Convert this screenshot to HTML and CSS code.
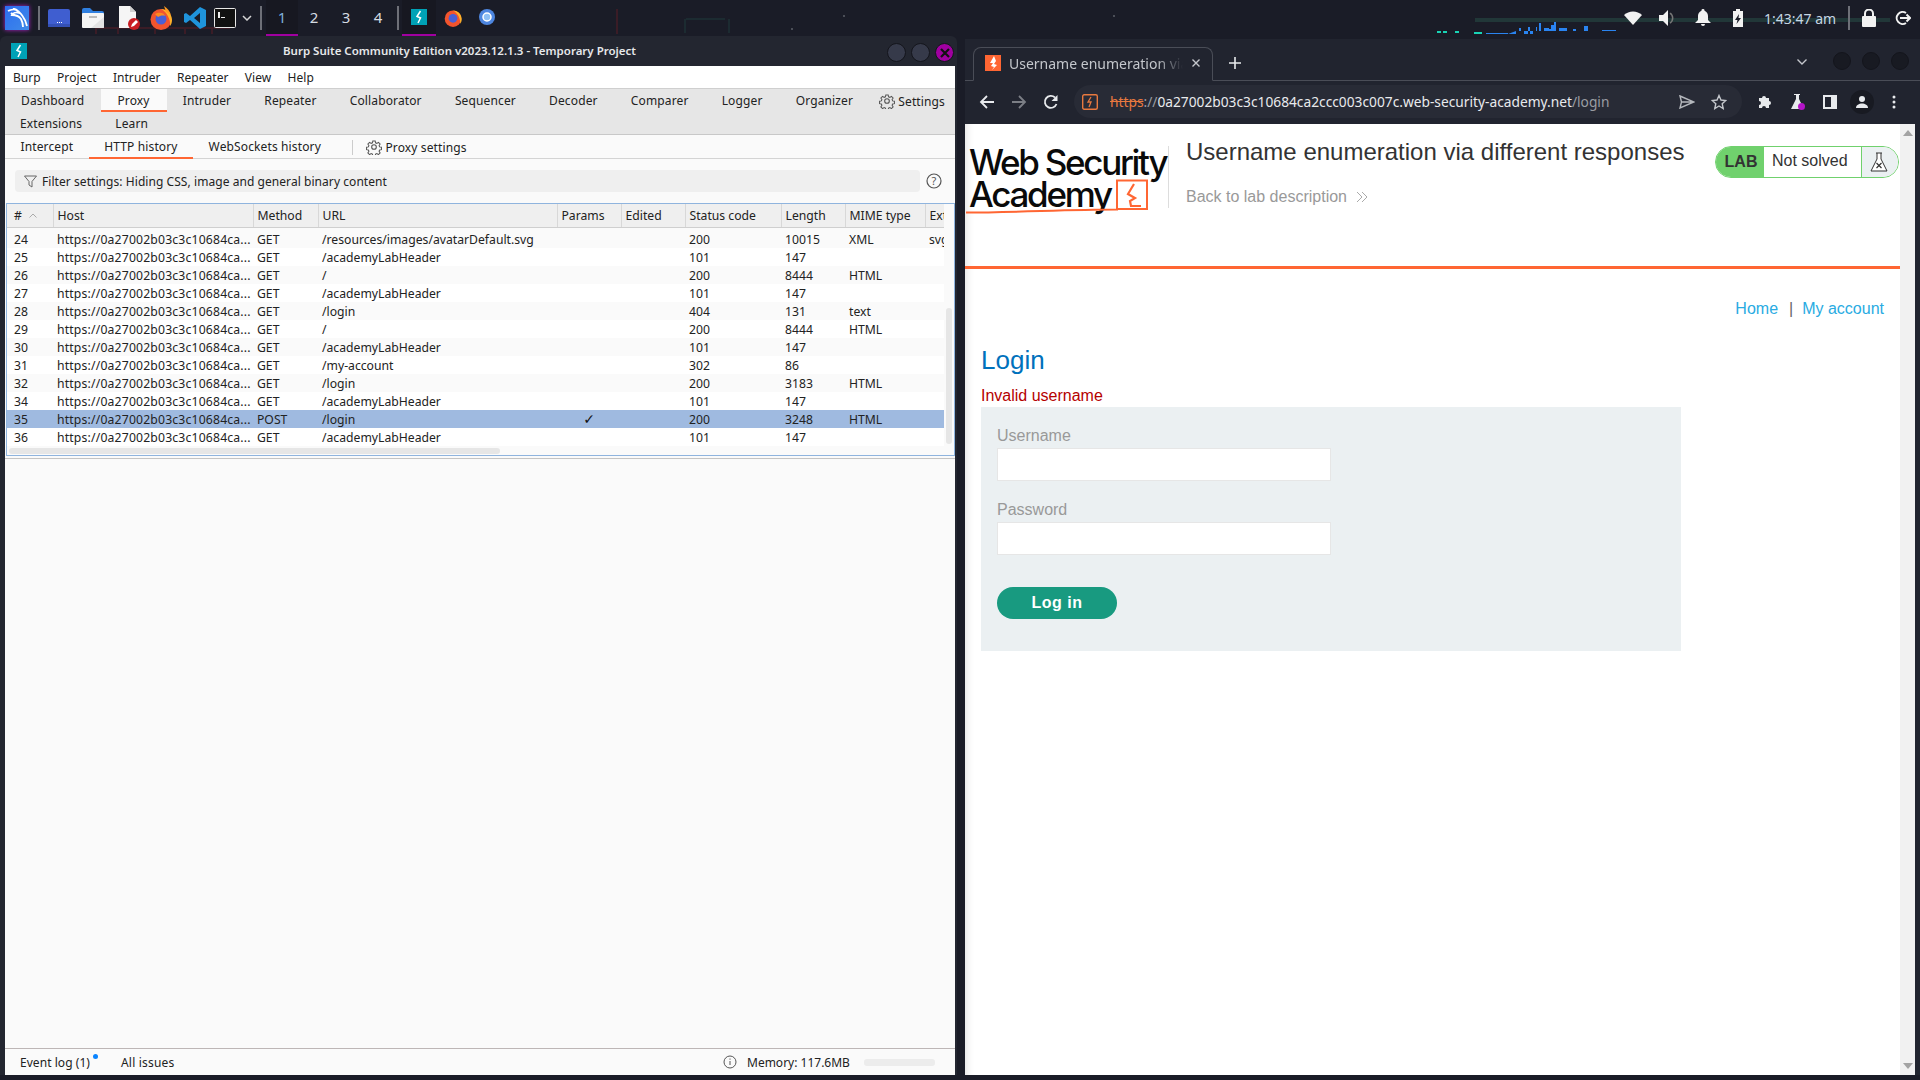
FILE: index.html
```html
<!DOCTYPE html>
<html lang="en">
<head>
  <meta charset="UTF-8">
  <title>Burp Suite and Web Security Academy</title>
  <link rel="stylesheet" href="styles.css">
</head>
<body>

<!-- top panel -->
<header class="panel">
  <svg class="panel-graph" width="1920" height="36" viewBox="0 0 1920 36">
    <g fill="none" stroke="#3a1c26" stroke-width="2">
      <path d="M96 34V28H230M118 34V28M155 34V28M185 34V28M212 34V28M617 34V9"/>
    </g>
    <path d="M685 33V19M729 33V19M686 19H725" fill="none" stroke="#1f3a3d" stroke-width="1"/>
    <path d="M1475 19H1890M1475 21H1890" stroke="#25403f" stroke-width="1.5"/>
    <path d="M1437 33h4v-2h-4zM1443 33h4v-2h-4zM1455 33h4v-2h-4zM1474 34h8v-2h-8z" fill="#19d3b5"/>
    <path d="M1486 34h22v-1h-22zM1508 34h8v-3h3v-3h2v3h3v3h4v-7h2v7h3v-3h3v-4h1v4h2v-8h2v8h3v-3h5v1h2v-4h3v-3h2v9h3v-3h8v3h6v-2h3v2h8v-5h4v5h14v-1h14v1h-100z" fill="#2a84f0"/>
    <g fill="#5c5f68"><circle cx="844" cy="16" r="1"/><circle cx="1114" cy="16" r="1"/><circle cx="792" cy="29" r="1"/></g>
  </svg>

  <div class="launcher launcher-kali">
    <svg width="24" height="24" viewBox="0 0 24 24">
      <defs><linearGradient id="kaliBg" x1="0" y1="0" x2="1" y2="1"><stop offset="0" stop-color="#2d6df0"/><stop offset="1" stop-color="#3f8ae8"/></linearGradient></defs>
      <rect width="24" height="24" fill="url(#kaliBg)"/>
      <path d="M3 5c5-3 10-1 13 3 2 3 4 4 6 12M8 3c3 0 5 2 6 4-3-1-6 0-7 2 3 0 7 1 9 4 1 2 2 4 2 8M6 7c3 3 7 2 9 5" fill="none" stroke="#fff" stroke-width="1.8"/>
    </svg>
  </div>
  <span class="panel-sep"></span>
  <div class="launcher">
    <svg width="22" height="18" viewBox="0 0 22 18"><rect width="22" height="18" rx="2" fill="#3f5ed0"/><rect y="15" width="22" height="3" fill="#3450b4"/><path d="M9 13h1v1H9zM11 13h1v1h-1zM13 13h1v1h-1z" fill="#fff"/></svg>
  </div>
  <div class="launcher">
    <svg width="22" height="20" viewBox="0 0 22 20"><path d="M0 2a2 2 0 012-2h6l3 3h9a2 2 0 012 2v3H0z" fill="#2f7fe0"/><rect y="5" width="22" height="15" rx="1" fill="#f4f4f4"/><path d="M22 9v10a1 1 0 01-1 1H9z" fill="#e2e2e2"/><rect x="7" y="8" width="8" height="2" fill="#bbb"/></svg>
  </div>
  <div class="launcher launcher-doc">
    <svg width="22" height="24" viewBox="0 0 22 24"><path d="M1 0h11l6 6v16H1z" fill="#f5f5f5"/><path d="M12 0l6 6h-6z" fill="#cfcfcf"/><circle cx="16" cy="18" r="6" fill="#c91c22"/><path d="M13 21l1-3 4-4 2 2-4 4z" fill="#fff"/></svg>
  </div>
  <div class="launcher">
    <svg width="22" height="24" viewBox="0 0 22 24"><circle cx="11" cy="13.5" r="10.5" fill="#f2542d"/><path d="M11 3c6 0 11 5 11 11 0 3-1 5-2 6 1-6-3-14-9-17z" fill="#ffb129"/><path d="M14 0c3 2 6 5 7 9l-5-3z" fill="#ff9a1f"/><circle cx="11" cy="13" r="5.5" fill="#4a5fd6"/><path d="M5 8c3-2 9-2 10 2-3-1-5 0-7 1z" fill="#ff8a1f"/></svg>
  </div>
  <div class="launcher">
    <svg width="22" height="22" viewBox="0 0 22 22"><path d="M16 0l6 3v16l-6 3L6 13l-4 3-2-1V7l2-1 4 3zm0 6l-6 5 6 5z" fill="#1f94dc"/></svg>
  </div>
  <div class="launcher launcher-term">
    <svg width="22" height="20" viewBox="0 0 22 20"><rect x=".5" y=".5" width="21" height="19" rx="1" fill="#111" stroke="#e8e8e8"/><path d="M4 4h2v6H4zM7 9h4v1H7z" fill="#eee"/></svg>
  </div>
  <svg class="panel-chevron" width="10" height="6" viewBox="0 0 10 6"><path d="M1 1l4 4 4-4" fill="none" stroke="#d5d5d5" stroke-width="1.5"/></svg>
  <span class="panel-sep panel-sep-b"></span>
  <div class="workspace active">1</div>
  <div class="workspace">2</div>
  <div class="workspace">3</div>
  <div class="workspace">4</div>
  <span class="panel-sep panel-sep-c"></span>
  <div class="task active">
    <svg width="16" height="16" viewBox="0 0 16 16"><rect width="16" height="16" fill="#00a2b6"/><path d="M9.5 2L6 7.500l3.500 1.500L7 14" fill="none" stroke="#fff" stroke-width="1.5"/></svg>
  </div>
  <div class="task">
    <svg width="18" height="19" viewBox="0 0 22 24"><circle cx="11" cy="13.5" r="10.5" fill="#f2542d"/><path d="M11 3c6 0 11 5 11 11 0 3-1 5-2 6 1-6-3-14-9-17z" fill="#ffb129"/><circle cx="11" cy="13" r="5.5" fill="#4a5fd6"/></svg>
  </div>
  <div class="task">
    <svg width="16" height="16" viewBox="0 0 16 16"><circle cx="8" cy="8" r="8" fill="#4d86e0"/><circle cx="8" cy="8" r="4" fill="#8fc0f5" stroke="#fff" stroke-width="1.5"/></svg>
  </div>

  <div class="tray">
    <div class="tray-item"><svg width="18" height="14" viewBox="0 0 18 14"><path d="M0 4a13 13 0 0118 0l-9 10z" fill="#f2f2f2"/></svg></div>
    <div class="tray-item"><svg width="18" height="18" viewBox="0 0 18 18"><path d="M0 6h4l5-5v16l-5-5H0z" fill="#f2f2f2"/><path d="M11 4a6 6 0 010 10" fill="none" stroke="#777" stroke-width="1.5"/></svg></div>
    <div class="tray-item"><svg width="16" height="18" viewBox="0 0 16 18"><path d="M8 0a1.5 1.5 0 011.5 1.7C12 2.5 13 5 13 7v4l3 3H0l3-3V7c0-2 1-4.500 3.5-5.300A1.5 1.5 0 018 0zM6 15h4a2 2 0 01-4 0z" fill="#f2f2f2"/></svg></div>
    <div class="tray-item"><svg width="10" height="18" viewBox="0 0 10 18"><path d="M3 0h4v2h3v16H0V2h3z" fill="#f2f2f2"/><path d="M6 5L2 11h2.5L3.5 15 8 9H5.5z" fill="#1a1c27"/></svg></div>
    <div class="clock">1:43:47 am</div>
    <span class="panel-sep panel-sep-d"></span>
    <div class="tray-item tray-item-end"><svg width="14" height="18" viewBox="0 0 14 18"><path d="M3 8V4.500a4 4 0 018 0V8" fill="none" stroke="#f2f2f2" stroke-width="2"/><rect y="7" width="14" height="11" rx="1" fill="#f2f2f2"/></svg></div>
    <div class="tray-item tray-item-end"><svg width="16" height="16" viewBox="0 0 16 16"><path d="M11 3a6 6 0 100 10" fill="none" stroke="#f2f2f2" stroke-width="2"/><path d="M5 8h10M11.5 4.5L15 8l-3.500 3.500" fill="none" stroke="#f2f2f2" stroke-width="2"/></svg></div>
  </div>
</header>

<main class="desktop">

  <!-- burp window -->
  <section class="burp">
    <div class="burp-title">
      <svg class="burp-logo" width="16" height="16" viewBox="0 0 16 16"><rect width="16" height="16" fill="#00a2b6"/><path d="M9.5 2L6 7.500l3.500 1.500L7 14" fill="none" stroke="#fff" stroke-width="1.5"/></svg>
      <span class="burp-title-text">Burp Suite Community Edition v2023.12.1.3 - Temporary Project</span>
      <div class="win-buttons">
        <span class="win-btn"></span>
        <span class="win-btn"></span>
        <span class="win-btn win-btn-close">
          <svg width="10" height="10" viewBox="0 0 10 10"><path d="M1 1l8 8M9 1L1 9" stroke="#111" stroke-width="2.2"/></svg>
        </span>
      </div>
    </div>

    <div class="burp-body">
      <nav class="menu-bar">
        <span>Burp</span><span>Project</span><span>Intruder</span><span>Repeater</span><span>View</span><span>Help</span>
      </nav>

      <div class="main-tabs">
        <div class="tab-row">
          <span class="tab">Dashboard</span>
          <span class="tab active">Proxy</span>
          <span class="tab">Intruder</span>
          <span class="tab">Repeater</span>
          <span class="tab">Collaborator</span>
          <span class="tab">Sequencer</span>
          <span class="tab">Decoder</span>
          <span class="tab">Comparer</span>
          <span class="tab">Logger</span>
          <span class="tab">Organizer</span>
          <span class="tab-settings">
            <svg width="16" height="16" viewBox="0 0 24 24"><use href="#gear"/></svg>
            Settings
          </span>
        </div>
        <div class="tab-row tab-row-second">
          <span class="tab">Extensions</span>
          <span class="tab">Learn</span>
        </div>
      </div>

      <div class="sub-tabs">
        <span class="tab">Intercept</span>
        <span class="tab active">HTTP history</span>
        <span class="tab">WebSockets history</span>
        <span class="sub-sep"></span>
        <span class="tab-settings">
          <svg width="16" height="16" viewBox="0 0 24 24"><use href="#gear"/></svg>
          Proxy settings
        </span>
      </div>

      <div class="filter-row">
        <div class="filter-box">
          <svg width="13" height="13" viewBox="0 0 13 13"><path d="M.5 1h12L8 6.5V12L5 10V6.5z" fill="none" stroke="#666"/></svg>
          Filter settings: Hiding CSS, image and general binary content
        </div>
        <svg class="help-icon" width="16" height="16" viewBox="0 0 16 16"><circle cx="8" cy="8" r="7" fill="none" stroke="#555" stroke-width="1.2"/><text x="8" y="11.5" text-anchor="middle" class="help-mark">?</text></svg>
      </div>

      <div class="history">
        <div class="history-clip">
          <table class="history-table">
            <colgroup>
              <col class="col-num"><col class="col-host"><col class="col-method"><col class="col-url"><col class="col-flag"><col class="col-flag"><col class="col-status"><col class="col-flag"><col class="col-mime"><col class="col-ext">
            </colgroup>
            <thead>
              <tr>
                <th># <svg class="sort-arrow" width="8" height="5" viewBox="0 0 8 5"><path d="M.5 4.5L4 1l3.5 3.5" fill="none" stroke="#aaa"/></svg></th>
                <th>Host</th><th>Method</th><th>URL</th><th>Params</th><th>Edited</th><th>Status code</th><th>Length</th><th>MIME type</th><th>Extension</th>
              </tr>
            </thead>
            <tbody>
              <tr><td>24</td><td>https://0a27002b03c3c10684ca...</td><td>GET</td><td>/resources/images/avatarDefault.svg</td><td></td><td></td><td>200</td><td>10015</td><td>XML</td><td>svg</td></tr>
              <tr><td>25</td><td>https://0a27002b03c3c10684ca...</td><td>GET</td><td>/academyLabHeader</td><td></td><td></td><td>101</td><td>147</td><td></td><td></td></tr>
              <tr><td>26</td><td>https://0a27002b03c3c10684ca...</td><td>GET</td><td>/</td><td></td><td></td><td>200</td><td>8444</td><td>HTML</td><td></td></tr>
              <tr><td>27</td><td>https://0a27002b03c3c10684ca...</td><td>GET</td><td>/academyLabHeader</td><td></td><td></td><td>101</td><td>147</td><td></td><td></td></tr>
              <tr><td>28</td><td>https://0a27002b03c3c10684ca...</td><td>GET</td><td>/login</td><td></td><td></td><td>404</td><td>131</td><td>text</td><td></td></tr>
              <tr><td>29</td><td>https://0a27002b03c3c10684ca...</td><td>GET</td><td>/</td><td></td><td></td><td>200</td><td>8444</td><td>HTML</td><td></td></tr>
              <tr><td>30</td><td>https://0a27002b03c3c10684ca...</td><td>GET</td><td>/academyLabHeader</td><td></td><td></td><td>101</td><td>147</td><td></td><td></td></tr>
              <tr><td>31</td><td>https://0a27002b03c3c10684ca...</td><td>GET</td><td>/my-account</td><td></td><td></td><td>302</td><td>86</td><td></td><td></td></tr>
              <tr><td>32</td><td>https://0a27002b03c3c10684ca...</td><td>GET</td><td>/login</td><td></td><td></td><td>200</td><td>3183</td><td>HTML</td><td></td></tr>
              <tr><td>34</td><td>https://0a27002b03c3c10684ca...</td><td>GET</td><td>/academyLabHeader</td><td></td><td></td><td>101</td><td>147</td><td></td><td></td></tr>
              <tr class="selected"><td>35</td><td>https://0a27002b03c3c10684ca...</td><td>POST</td><td>/login</td><td class="check">✓</td><td></td><td>200</td><td>3248</td><td>HTML</td><td></td></tr>
              <tr><td>36</td><td>https://0a27002b03c3c10684ca...</td><td>GET</td><td>/academyLabHeader</td><td></td><td></td><td>101</td><td>147</td><td></td><td></td></tr>
            </tbody>
          </table>
        </div>
        <span class="scroll-h"></span>
        <span class="scroll-v"></span>
      </div>

      <div class="burp-empty"></div>

      <footer class="status-bar">
        <span class="event-log">Event log (1)<i class="dot"></i></span>
        <span class="all-issues">All issues</span>
        <span class="memory">
          <svg width="14" height="14" viewBox="0 0 14 14"><circle cx="7" cy="7" r="6" fill="none" stroke="#555"/><path d="M7 6v4M7 3.5v1.2" stroke="#555"/></svg>
          Memory: 117.6MB
        </span>
        <span class="memory-bar"></span>
      </footer>
    </div>
  </section>

  <!-- browser window -->
  <section class="browser">
    <div class="tab-strip">
      <div class="browser-tab">
        <svg width="16" height="16" viewBox="0 0 16 16"><rect width="16" height="16" fill="#ff6633"/><path d="M9 1L5 8h3L6 11l3 1-2 3 5-5-3-1 2-3z" fill="#fff"/></svg>
        <span class="browser-tab-title">Username enumeration via different responses</span>
        <svg width="10" height="10" viewBox="0 0 10 10"><path d="M1.5 1.5l7 7M8.5 1.5l-7 7" stroke="#c4c7cc" stroke-width="1.4"/></svg>
      </div>
      <svg class="new-tab" width="12" height="12" viewBox="0 0 12 12"><path d="M6 0v12M0 6h12" stroke="#e8eaed" stroke-width="1.6"/></svg>
      <svg class="tab-list" width="10" height="6" viewBox="0 0 10 6"><path d="M.5.5L5 5 9.5.5" fill="none" stroke="#c4c7cc" stroke-width="1.4"/></svg>
      <span class="chrome-btn"></span>
      <span class="chrome-btn"></span>
      <span class="chrome-btn"></span>
    </div>

    <div class="toolbar">
      <div class="tool"><svg width="16" height="16" viewBox="0 0 16 16"><path d="M15 8H2M8 2L2 8l6 6" fill="none" stroke="#e8eaed" stroke-width="1.8"/></svg></div>
      <div class="tool"><svg width="16" height="16" viewBox="0 0 16 16"><path d="M1 8h13M8 2l6 6-6 6" fill="none" stroke="#7b7e85" stroke-width="1.8"/></svg></div>
      <div class="tool"><svg width="16" height="16" viewBox="0 0 16 16"><path d="M13.5 10A6 6 0 1112 3.5" fill="none" stroke="#e8eaed" stroke-width="1.8"/><path d="M14.5 1v6h-6z" fill="#e8eaed"/></svg></div>
      <div class="omnibox">
        <svg class="site-icon" width="16" height="16" viewBox="0 0 16 16"><rect x=".7" y=".7" width="14.6" height="14.6" rx="1.5" fill="none" stroke="#e8793f" stroke-width="1.4"/><path d="M9 3L6 8h3l-2 5" fill="none" stroke="#e8793f" stroke-width="1.3"/></svg>
        <span class="url"><s class="url-scheme">https</s><span class="url-dim">://</span>0a27002b03c3c10684ca2ccc003c007c.web-security-academy.net<span class="url-dim">/login</span></span>
        <svg class="omni-send" width="16" height="14" viewBox="0 0 16 14"><path d="M1 1l14 6L1 13l1.5-6zM2.5 7H15" fill="none" stroke="#b5b8bd" stroke-width="1.4"/></svg>
        <svg class="omni-star" width="16" height="16" viewBox="0 0 16 16"><path d="M8 1.5l2 4.500 4.800.5-3.600 3.200 1 4.800L8 12l-4.200 2.500 1-4.800L1.200 6.500 6 6z" fill="none" stroke="#c4c7cc" stroke-width="1.4"/></svg>
      </div>
      <div class="tool"><svg width="15" height="15" viewBox="0 0 15 15"><path d="M1 4h3a2 2 0 014 0h3v3a2 2 0 010 4v3H8a2 2 0 00-4 0H1v-3a2 2 0 000-4z" fill="#e8eaed"/></svg></div>
      <div class="tool"><svg width="15" height="16" viewBox="0 0 15 16"><path d="M4 0h6v1H9v4l5 10H1L6 5V1H4z" fill="#e8eaed"/><circle cx="11.5" cy="12.5" r="3.5" fill="#b414c8"/></svg></div>
      <div class="tool"><svg width="14" height="14" viewBox="0 0 14 14"><rect x="1" y="1" width="12" height="12" fill="none" stroke="#e8eaed" stroke-width="2"/><rect x="8" y="1" width="5" height="12" fill="#e8eaed"/></svg></div>
      <div class="tool"><span class="avatar"><svg width="14" height="14" viewBox="0 0 14 14"><circle cx="7" cy="4" r="3" fill="#e8eaed"/><path d="M1 13c0-3 3-4.500 6-4.500s6 1.500 6 4.500z" fill="#e8eaed"/></svg></span></div>
      <div class="tool"><svg width="4" height="14" viewBox="0 0 4 14"><circle cx="2" cy="2" r="1.5" fill="#e8eaed"/><circle cx="2" cy="7" r="1.5" fill="#e8eaed"/><circle cx="2" cy="12" r="1.5" fill="#e8eaed"/></svg></div>
    </div>

    <div class="viewport">
      <div class="page">
        <div class="lab-header">
          <div class="academy-logo">
            <div class="academy-line">Web Security</div>
            <div class="academy-line">Academy</div>
            <svg class="academy-mark" width="184" height="38" viewBox="0 0 184 38">
              <path d="M0 34.500c50 0 100-3 151-3V2.500h30V31h-30" fill="none" stroke="#ff6633" stroke-width="2"/>
              <path d="M168 6l-6 10 7 4-5 3 1 5h10" fill="none" stroke="#ff6633" stroke-width="2.2"/>
            </svg>
          </div>
          <div class="lab-title">
            <h2>Username enumeration via different responses</h2>
            <a class="back-link">Back to lab description
              <svg width="12" height="12" viewBox="0 0 12 12"><path d="M1 1l5 5-5 5M6 1l5 5-5 5" fill="none" stroke="#aaa"/></svg>
            </a>
          </div>
          <div class="lab-status">
            <span class="lab-tag">LAB</span>
            <span class="lab-state">Not solved</span>
            <span class="lab-flask">
              <svg width="18" height="20" viewBox="0 0 18 20"><path d="M6 1h6M7 1v6L1 19h16L11 7V1" fill="#fff" stroke="#333"/><path d="M6.5 11l5 5M11.5 11l-5 5" stroke="#333" stroke-width="1.2"/></svg>
            </span>
          </div>
        </div>

        <div class="page-main">
          <nav class="page-nav"><a>Home</a><span class="nav-bar">|</span><a>My account</a></nav>
          <h1>Login</h1>
          <p class="is-warning">Invalid username</p>
          <form class="login-form">
            <label for="username">Username</label>
            <input id="username" type="text">
            <label for="password">Password</label>
            <input id="password" type="password">
            <button type="button">Log in</button>
          </form>
        </div>
      </div>

      <div class="page-scroll">
        <svg width="10" height="6" viewBox="0 0 10 6"><path d="M5 0l5 6H0z" fill="#a3a3a3"/></svg>
        <svg width="10" height="6" viewBox="0 0 10 6"><path d="M5 6L0 0h10z" fill="#a3a3a3"/></svg>
      </div>
    </div>
  </section>
</main>

<svg class="icon-defs" width="0" height="0">
  <symbol id="gear" viewBox="0 0 24 24">
    <path d="M10 2h4l.6 3 2.2.9 2.6-1.700 2.800 2.800-1.700 2.600.9 2.200 3 .6v4l-3 .6-.9 2.200 1.700 2.600-2.800 2.800-2.600-1.700-2.200.9-.6 3h-4l-.6-3-2.200-.9-2.600 1.700-2.800-2.800 1.700-2.600-.9-2.200-3-.6v-4l3-.6.9-2.200-1.700-2.600 2.800-2.800 2.600 1.700 2.200-.9z" transform="translate(1.2 1.2) scale(.9)" fill="none" stroke="#555" stroke-width="1.7"/>
    <circle cx="12" cy="12" r="3.5" fill="none" stroke="#555" stroke-width="1.6"/>
  </symbol>
</svg>

</body>
</html>
```

FILE: styles.css
```css
* {
  box-sizing: border-box;
}
body {
  margin: 0;
  width: 1920px;
  height: 1080px;
  overflow: hidden;
  background-color: #1a1c27;
  font-family: "Noto Sans", sans-serif;
  font-size: 12px;
  color: #222;
  display: flex;
  flex-direction: column;
}
.icon-defs {
  position: absolute;
}

/* top panel */
.panel {
  position: relative;
  height: 36px;
  flex: none;
  display: flex;
  align-items: center;
  padding-left: 5px;
}
.panel > * {
  position: relative;
}
.panel > .panel-graph {
  position: absolute;
  left: 0;
  top: 0;
}
.launcher {
  width: 34px;
  height: 36px;
  display: flex;
  align-items: center;
  justify-content: center;
}
.launcher-kali {
  width: 24px;
  filter: drop-shadow(0 0 2px #b020c8);
}
.launcher-doc {
  margin-left: 2px;
  margin-right: -2px;
}
.launcher-term {
  margin-left: -4px;
}
.panel-sep {
  width: 2px;
  height: 24px;
  background-color: #6e7078;
  margin: 0 2.5px 0 8.5px;
}
.panel-sep-b {
  margin: 0 4px 0 8px;
}
.panel-sep-c {
  margin: 0 3px 0 3px;
}
.workspace,
.task {
  height: 36px;
  display: flex;
  align-items: center;
  justify-content: center;
  border-bottom: 2px solid transparent;
}
.workspace {
  width: 32px;
  font-size: 15px;
  color: #d5dbe2;
}
.task {
  width: 34px;
}
.workspace.active,
.task.active {
  background-color: #171821;
  border-bottom-color: #a000a0;
}
.workspace.active {
  color: #7fb0dc;
}
.tray {
  margin-left: auto;
  display: flex;
  align-items: center;
  height: 36px;
}
.tray-item {
  width: 35px;
  display: flex;
  justify-content: center;
}
.tray-item-end {
  width: 34px;
}
.clock {
  width: 71px;
  margin-left: 9px;
  font-size: 14px;
  white-space: nowrap;
  color: #c6d6e4;
}
.panel-sep-d {
  margin: 0 2px 0 13px;
}

/* windows */
.desktop {
  flex: 1;
  display: flex;
  padding-bottom: 5px;
  min-height: 0;
}
.burp {
  width: 957px;
  display: flex;
  flex-direction: column;
  background-color: #232630;
  border-radius: 6px 6px 0 0;
  margin-right: 8px;
}
.burp-title {
  height: 30px;
  flex: none;
  display: flex;
  align-items: center;
  justify-content: center;
  position: relative;
}
.burp-logo {
  position: absolute;
  left: 11px;
  top: 7px;
}
.burp-title-text {
  font-weight: 600;
  font-size: 11.5px;
  color: #e6e8ea;
  margin-left: -38px;
  padding-bottom: 1px;
}
.win-buttons {
  position: absolute;
  right: 3px;
  top: 7px;
  display: flex;
  gap: 5px;
}
.win-btn {
  width: 19px;
  height: 19px;
  border-radius: 50%;
  background-color: #363a4a;
  border: 1px solid #14151c;
  display: flex;
  align-items: center;
  justify-content: center;
}
.win-btn-close {
  background-color: #a000a0;
}
.burp-body {
  flex: 1;
  min-height: 0;
  margin: 0 2px 0 5px;
  background-color: #fafafa;
  display: flex;
  flex-direction: column;
}
.menu-bar {
  height: 22px;
  flex: none;
  background-color: #fff;
  display: flex;
  align-items: center;
  gap: 16.3px;
  padding-left: 8px;
  letter-spacing: .05px;
}
.main-tabs {
  flex: none;
  height: 47px;
  background-color: #e6e6e6;
  border-top: 1px solid #cfcfcf;
  border-bottom: 1px solid #c8c8c8;
}
.tab-row {
  height: 23px;
  display: flex;
  align-items: center;
}
.tab-row-second {
  margin-left: -1px;
}
.tab {
  height: 23px;
  padding: 2px 17.2px 0 16px;
  display: flex;
  align-items: center;
  border-bottom: 2px solid transparent;
  letter-spacing: .13px;
}
.tab.active {
  background-color: #fafafa;
  border-bottom-color: #ff6633;
}
.tab-settings {
  display: flex;
  align-items: center;
  gap: 3px;
  white-space: nowrap;
  letter-spacing: .13px;
}
.tab-row .tab-settings {
  margin-left: auto;
  padding: 1px 10px 0 0;
}
.sub-tabs {
  height: 24px;
  flex: none;
  display: flex;
  align-items: center;
  border-bottom: 1px solid #d4d4d4;
  padding-top: 1px;
}
.sub-tabs .tab {
  height: 23px;
  padding: 0 15.5px;
}
.sub-sep {
  width: 1px;
  height: 15px;
  background-color: #ccc;
  margin: 0 13px 0 16px;
}
.filter-row {
  flex: none;
  height: 22px;
  margin: 11px 0;
  display: flex;
  align-items: center;
}
.filter-box {
  width: 905px;
  height: 22px;
  margin-left: 10px;
  padding-left: 9px;
  background-color: #efefef;
  border-radius: 4px;
  display: flex;
  align-items: center;
  gap: 5px;
  letter-spacing: .06px;
}
.help-icon {
  margin-left: 6px;
}
.help-mark {
  font-size: 11px;
  fill: #555;
}

/* history table */
.history {
  position: relative;
  flex: none;
  height: 253px;
  margin-left: 1px;
  border: 1px solid #8fb4de;
  padding-right: 10px;
  font-size: 12.2px;
}
.history-clip {
  overflow: hidden;
  height: 100%;
}
.history-table {
  border-collapse: collapse;
  table-layout: fixed;
  width: 1040px;
}
.col-num { width: 46px; }
.col-host { width: 200px; }
.col-method { width: 65px; }
.col-url { width: 239px; }
.col-flag { width: 64px; }
.col-status { width: 96px; }
.col-mime { width: 80px; }
.col-ext { width: 122px; }
.history-table th {
  height: 23px;
  padding: 0 4px;
  text-align: left;
  font-weight: 400;
  background-color: #efefef;
  border-right: 1px solid #d8d8d8;
  border-bottom: 1px solid #cfcfcf;
  white-space: nowrap;
  overflow: hidden;
}
.history-table td {
  height: 18px;
  padding: 0 4px;
  white-space: nowrap;
  overflow: hidden;
}
.history-table td:nth-child(2) {
  letter-spacing: .18px;
}
.history-table th:first-child,
.history-table td:first-child {
  padding-left: 7px;
}
.history-table tbody::before {
  content: "";
  display: table-row;
  height: 3px;
}
.history-table tbody tr:nth-child(odd) {
  background-color: #fafafa;
}
.history-table tbody tr:nth-child(even) {
  background-color: #fff;
}
.history-table tbody tr.selected {
  background-color: #9fbae0;
}
.history-table td.check {
  text-align: center;
  font-family: "DejaVu Sans", sans-serif;
  font-size: 14px;
  font-weight: 700;
  color: #111;
}
.sort-arrow {
  margin-left: 4px;
  vertical-align: 2px;
}
.scroll-h {
  position: absolute;
  left: 2px;
  top: 244px;
  width: 491px;
  height: 6px;
  background-color: #e6e6e6;
  border-radius: 3px;
}
.scroll-v {
  position: absolute;
  right: 2px;
  top: 104px;
  width: 6px;
  height: 136px;
  background-color: #e6e6e6;
  border-radius: 3px;
}
.burp-empty {
  flex: 1;
  margin-top: 2px;
  border-top: 1px solid #c4c4c4;
}
.status-bar {
  height: 27px;
  flex: none;
  display: flex;
  align-items: center;
  border-top: 1px solid #bdb6b6;
  padding-left: 15px;
}
.event-log {
  position: relative;
  width: 101px;
  letter-spacing: .05px;
}
.dot {
  position: absolute;
  left: 73px;
  top: 0;
  width: 5px;
  height: 5px;
  border-radius: 50%;
  background-color: #0a84ff;
}
.all-issues {
  width: 602px;
  letter-spacing: .2px;
}
.memory {
  display: flex;
  align-items: center;
  gap: 10px;
  width: 141px;
  white-space: nowrap;
}
.memory-bar {
  width: 71px;
  height: 7px;
  background-color: #ececec;
  border-radius: 3px;
}

/* browser */
.browser {
  flex: 1;
  margin-top: 3px;
  display: flex;
  flex-direction: column;
  background-color: #21242f;
  min-width: 0;
}
.tab-strip {
  height: 42px;
  flex: none;
  display: flex;
  align-items: flex-end;
  padding-left: 8px;
  border-bottom: 1px solid #4a4d57;
  position: relative;
}
.browser-tab {
  width: 240px;
  height: 34px;
  margin-bottom: -1px;
  background-color: #21242f;
  border: 1px solid #4a4d57;
  border-bottom: 1px solid #21242f;
  border-radius: 8px 8px 0 0;
  display: flex;
  align-items: center;
  padding: 0 11px 2px;
  gap: 8px;
}
.browser-tab-title {
  flex: 1;
  font-size: 14px;
  color: #c4c7cc;
  white-space: nowrap;
  overflow: hidden;
  -webkit-mask-image: linear-gradient(to right, #000 85%, transparent);
  mask-image: linear-gradient(to right, #000 85%, transparent);
}
.new-tab {
  margin: 0 0 11px 16px;
}
.tab-list {
  margin: 0 26px 15px auto;
}
.chrome-btn {
  width: 18px;
  height: 18px;
  border-radius: 50%;
  background-color: #181a22;
  border: 1px solid #14151c;
  margin: 0 11px 10px 0;
}
.toolbar {
  height: 41px;
  flex: none;
  display: flex;
  align-items: center;
  padding-left: 6px;
}
.tool {
  width: 32px;
  height: 32px;
  display: flex;
  align-items: center;
  justify-content: center;
}
.omnibox {
  width: 668px;
  height: 33px;
  margin: 0 7.5px 0 7px;
  padding: 0 15px 0 8px;
  background-color: #282b36;
  border-radius: 17px;
  display: flex;
  align-items: center;
}
.url {
  margin-left: 12px;
  font-size: 13.75px;
  color: #e8eaed;
  white-space: nowrap;
}
.url-scheme {
  color: #e8793f;
}
.url-dim {
  color: #9a9da3;
}
.omni-send {
  margin-left: auto;
  margin-right: 16px;
}
.avatar {
  width: 24px;
  height: 24px;
  border-radius: 50%;
  background-color: #181a22;
  display: flex;
  align-items: center;
  justify-content: center;
}
.viewport {
  flex: 1;
  min-height: 0;
  margin-top: 2px;
  display: flex;
  padding-right: 5px;
}
.page {
  flex: 1;
  min-width: 0;
  background-color: #fff;
  box-shadow: inset 9px 0 8px -8px #ddd;
  font-family: "Liberation Sans", Arial, sans-serif;
  font-size: 16px;
  color: #333;
}
.page-scroll {
  width: 15px;
  background-color: #f1f1f1;
  display: flex;
  flex-direction: column;
  justify-content: space-between;
  align-items: center;
  padding: 6px 0;
}
.lab-header {
  height: 145px;
  border-bottom: 3px solid #ff6633;
  display: flex;
  align-items: flex-start;
}
.academy-logo {
  position: relative;
  width: 200px;
  height: 62px;
  margin: 22px 0 0 4px;
  border-right: 1px solid #ddd;
  font-family: Inter, sans-serif;
  font-weight: 500;
  font-size: 35px;
  line-height: 32px;
  letter-spacing: -2.3px;
  color: #0a0a0a;
  white-space: nowrap;
}
.academy-mark {
  position: absolute;
  left: -3px;
  top: 32px;
}
.lab-title {
  margin-left: 17px;
  padding-top: 11px;
  width: 529px;
}
.lab-title h2 {
  margin: 0;
  font-size: 24px;
  font-weight: 400;
  line-height: 34px;
  white-space: nowrap;
}
.back-link {
  display: block;
  margin-top: 18.5px;
  color: #999;
  line-height: 18px;
}
.back-link svg {
  margin-left: 5px;
  vertical-align: -1px;
}
.lab-status {
  display: flex;
  width: 184px;
  height: 32px;
  margin-top: 22px;
  border: 1px solid #70d16d;
  border-radius: 16px;
  overflow: hidden;
}
.lab-tag {
  width: 48px;
  background-color: #70d16d;
  font-weight: 700;
  text-align: center;
  line-height: 30px;
  padding-left: 2px;
}
.lab-state {
  width: 98px;
  padding-left: 8px;
  line-height: 28px;
  border-right: 1px solid #70d16d;
}
.lab-flask {
  flex: 1;
  background-color: #ebf0f2;
  display: flex;
  align-items: center;
  justify-content: center;
  padding-right: 2px;
}
.page-main {
  padding: 0 16px;
}
.page-nav {
  display: flex;
  justify-content: flex-end;
  align-items: center;
  height: 18px;
  margin-top: 31px;
  color: #29abe2;
}
.nav-bar {
  color: #666;
  margin: 0 9px 0 11px;
}
.page-main h1 {
  margin: 26px 0 0;
  font-size: 26px;
  font-weight: 400;
  line-height: 32px;
  color: #0071bc;
}
.is-warning {
  margin: 11px 0 0;
  color: #b50000;
  line-height: 18px;
}
.login-form {
  width: 700px;
  height: 244px;
  margin-top: 2px;
  padding: 20px 16px 0;
  background-color: #ebf0f2;
  display: flex;
  flex-direction: column;
  align-items: flex-start;
}
.login-form label {
  color: #999;
  line-height: 18px;
  margin-bottom: 3px;
}
.login-form input {
  width: 334px;
  height: 33px;
  border: 1px solid #e6e6e6;
  background-color: #fff;
  margin: 0 0 20px;
  padding: 0 8px;
}
.login-form button {
  width: 120px;
  height: 32px;
  margin-top: 12px;
  border: none;
  border-radius: 16px;
  background-color: #189a80;
  color: #fff;
  font-family: "Liberation Sans", Arial, sans-serif;
  font-size: 16px;
  font-weight: 700;
  letter-spacing: .5px;
  cursor: pointer;
}
```
